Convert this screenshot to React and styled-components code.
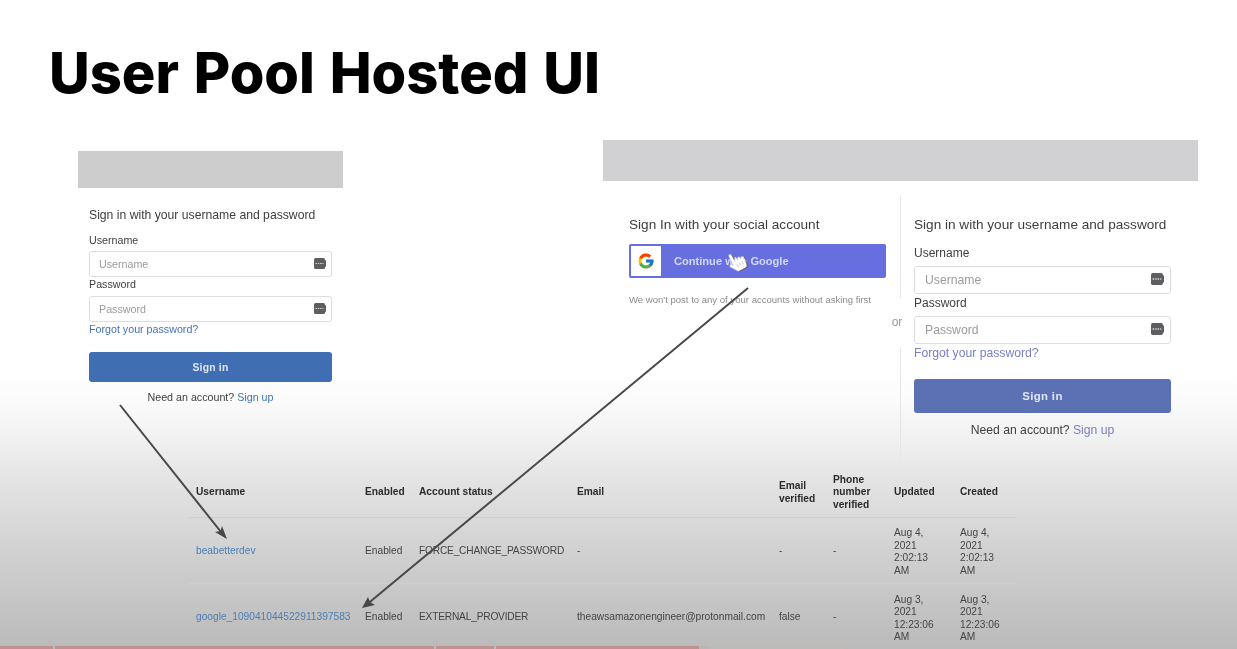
import React from "react";
import styled, { createGlobalStyle } from "styled-components";
import { FcGoogle } from "react-icons/fc";
import { FaHandPointer } from "react-icons/fa";

const Global = createGlobalStyle`
  html, body { margin: 0; padding: 0; background: #fff; }
  * { box-sizing: border-box; }
`;

const Slide = styled.div`
  position: relative;
  width: 1237px;
  height: 649px;
  overflow: hidden;
  font-family: "Liberation Sans", Arial, sans-serif;
  background: linear-gradient(180deg, #fff 0, #fff 370px, #fbfbfb 400px, #f2f2f2 435px, #e5e5e5 475px, #cfcfcf 560px, #bababa 649px);
`;

const Soft = styled.div`
  filter: blur(0.5px);
`;

const TitleBlock = styled.header`
  height: 140px;
  padding: 38px 0 0 49px;
`;

const Title = styled.h1`
  margin: 0;
  font-family: Inter, "Open Sans", sans-serif;
  font-size: 56px;
  line-height: 70px;
  font-weight: 800;
  letter-spacing: 0;
  word-spacing: 2.5px;
  white-space: nowrap;
  color: #000;
`;

const Panels = styled.section`
  display: flex;
  align-items: flex-start;
  height: 330px;
  padding-left: 78px;
  gap: 260px;
`;

const LeftPanel = styled.div`
  width: 265px;
  margin-top: 11px;
`;

const RightPanel = styled.div`
  width: 595px;
`;

const GreyBanner = styled.div`
  height: ${(p) => p.$h}px;
  background: ${(p) => p.$c};
`;

const LeftBody = styled.div`
  padding: 19px 11px 0;
`;

const RightBody = styled.div`
  display: flex;
  margin-top: 14px;
  padding-left: 26px;
`;

const SocialCol = styled.div`
  width: 257px;
  padding-top: 21px;
`;

const Heading = styled.div`
  color: #3e3e40;
  white-space: nowrap;
  font-size: ${(p) => (p.$lg ? 13.6 : 12.2)}px;
  line-height: ${(p) => (p.$lg ? 18 : 16)}px;
`;

const GoogleButton = styled.div`
  position: relative;
  display: flex;
  align-items: center;
  height: 34px;
  margin-top: 10px;
  background: #676fe0;
  border: 2px solid #676fe0;
  border-radius: 2px;
`;

const GoogleMark = styled.div`
  display: flex;
  align-items: center;
  justify-content: center;
  width: 30px;
  height: 30px;
  background: #fff;
`;

const GoogleText = styled.span`
  margin-left: 13px;
  color: #d5d8f8;
  font-size: 11.1px;
  font-weight: 700;
`;

const Hand = styled.div`
  position: absolute;
  left: 96px;
  top: 6px;
  color: #fff;
  line-height: 0;
  transform: rotate(-28deg);
  filter: drop-shadow(1px 1px 0.5px #5f5f66);
`;

const Note = styled.div`
  margin-top: 16px;
  color: #8b8b8f;
  font-size: 9.55px;
  line-height: 12px;
  white-space: nowrap;
`;

const DividerCol = styled.div`
  display: flex;
  flex-direction: column;
  align-items: center;
  width: 28px;
`;

const DividerLine = styled.div`
  width: 1px;
  height: ${(p) => p.$h}px;
  background: #e6e6e6;
`;

const OrLabel = styled.div`
  height: 49px;
  margin-left: -6px;
  color: #9a9a9c;
  font-size: 12px;
  line-height: 49px;
`;

const FormCol = styled.div`
  width: 257px;
  padding-top: 21px;
`;

const FieldLabel = styled.div`
  color: #3e3e40;
  font-size: ${(p) => (p.$lg ? 12 : 10.7)}px;
  line-height: ${(p) => p.$line}px;
  margin-top: ${(p) => p.$top || 0}px;
`;

const InputBox = styled.div`
  display: flex;
  align-items: center;
  justify-content: space-between;
  height: ${(p) => (p.$lg ? 28 : 26)}px;
  margin-top: ${(p) => p.$top}px;
  padding: 0 ${(p) => (p.$lg ? 6 : 5)}px 0 ${(p) => (p.$lg ? 10 : 9)}px;
  background: #fff;
  border: 1.5px solid #dedede;
  border-radius: 3px;
  color: #9b9b9d;
  font-size: ${(p) => (p.$lg ? 12.2 : 10.7)}px;
`;

const KeyIcon = styled.svg`
  display: block;
  width: ${(p) => (p.$lg ? 13 : 12)}px;
  height: ${(p) => (p.$lg ? 12 : 11)}px;
  margin-top: -2px;
`;

const Forgot = styled.a`
  display: block;
  color: ${(p) => (p.$lg ? "#7880c4" : "#4273b6")};
  font-size: ${(p) => (p.$lg ? 12.2 : 10.7)}px;
  line-height: ${(p) => (p.$lg ? 18 : 14)}px;
`;

const SignIn = styled.div`
  display: flex;
  align-items: center;
  justify-content: center;
  height: ${(p) => (p.$lg ? 34 : 30)}px;
  margin-top: ${(p) => (p.$lg ? 17 : 16)}px;
  background: ${(p) => (p.$lg ? "#5b71b4" : "#3f6eb2")};
  border-radius: 3px;
  color: #dfe6f4;
  font-weight: 700;
  font-size: ${(p) => (p.$lg ? 11.4 : 10.4)}px;
  letter-spacing: ${(p) => (p.$lg ? 0.35 : 0.2)}px;
`;

const NeedAccount = styled.div`
  text-align: center;
  color: #404042;
  margin-top: ${(p) => (p.$lg ? 9 : 8)}px;
  font-size: ${(p) => (p.$lg ? 12.2 : 10.7)}px;
  line-height: ${(p) => (p.$lg ? 16 : 14)}px;
`;

const SignUp = styled.a`
  color: ${(p) => (p.$lg ? "#7880c4" : "#4273b6")};
`;

const UsersTable = styled.section`
  margin-left: 189px;
  width: 828px;
`;

const Row = styled.div`
  display: grid;
  grid-template-columns: 169px 54px 158px 202px 54px 61px 66px 64px;
  align-items: center;
  height: ${(p) => p.$h}px;
  padding-top: ${(p) => p.$pad || 0}px;
  padding-bottom: ${(p) => p.$padBottom || 0}px;
  border-bottom: ${(p) => (p.$line ? "1px solid #cfcfcf" : "none")};
`;

const HeadCell = styled.div`
  padding-left: 7px;
  color: #2b2b2b;
  font-weight: 700;
  font-size: 10.2px;
  line-height: 12.6px;
`;

const Cell = styled.div`
  padding-left: 7px;
  color: #454545;
  font-size: 10.2px;
  line-height: 12.5px;
  white-space: nowrap;
`;

const StatusCell = styled(Cell)`
  letter-spacing: -0.2px;
`;

const StampCell = styled(Cell)`
  padding-top: 2px;
`;

const UserLink = styled.a`
  color: #4b7fb5;
`;

const Arrows = styled.svg`
  position: absolute;
  left: 0;
  top: 0;
  pointer-events: none;
  filter: blur(0.35px);
`;

const Progress = styled.div`
  position: absolute;
  left: 0;
  right: 0;
  bottom: 0;
  height: 3px;
  display: flex;
`;

const ProgressPiece = styled.div`
  height: 3px;
  width: ${(p) => p.$w}px;
  margin-right: ${(p) => p.$gap || 0}px;
  background: ${(p) => p.$c};
`;

const Key = ({ lg }) => (
  <KeyIcon $lg={lg} viewBox="0 0 12 11">
    <rect x="0" y="0" width="11" height="11" rx="1.5" fill="#5e5e60" />
    <rect x="9.5" y="2" width="2.5" height="7" rx="1" fill="#5e5e60" />
    <path d="M1.5 5.5h8" stroke="#d8d8d8" strokeWidth="1.2" strokeDasharray="1.4 .9" />
  </KeyIcon>
);

const Login = ({ lg }) => (
  <>
    <Heading $lg={lg}>Sign in with your username and password</Heading>
    <FieldLabel $lg={lg} $line={14} $top={lg ? 12 : 10}>Username</FieldLabel>
    <InputBox $lg={lg} $top={lg ? 6 : 4}>Username<Key lg={lg} /></InputBox>
    <FieldLabel $lg={lg} $line={lg ? 18 : 14}>Password</FieldLabel>
    <InputBox $lg={lg} $top={lg ? 4 : 5}>Password<Key lg={lg} /></InputBox>
    <Forgot $lg={lg}>Forgot your password?</Forgot>
    <SignIn $lg={lg}>Sign in</SignIn>
    <NeedAccount $lg={lg}>Need an account? <SignUp $lg={lg}>Sign up</SignUp></NeedAccount>
  </>
);

const heads = ["Username", "Enabled", "Account status", "Email", "Email verified", "Phone number verified", "Updated", "Created"];

const users = [
  ["beabetterdev", "Enabled", "FORCE_CHANGE_PASSWORD", "-", "-", "-", ["Aug 4,", "2021", "2:02:13", "AM"]],
  ["google_109041044522911397583", "Enabled", "EXTERNAL_PROVIDER", "theawsamazonengineer@protonmail.com", "false", "-", ["Aug 3,", "2021", "12:23:06", "AM"]],
];

const Stamp = ({ lines }) => (
  <StampCell>{lines.map((l) => <div key={l}>{l}</div>)}</StampCell>
);

export default function App() {
  return (
    <Slide>
      <Global />
      <Soft>
        <TitleBlock><Title>User Pool Hosted UI</Title></TitleBlock>
        <Panels>
          <LeftPanel>
            <GreyBanner $h={37} $c="#cdcdce" />
            <LeftBody><Login /></LeftBody>
          </LeftPanel>
          <RightPanel>
            <GreyBanner $h={41} $c="#d1d1d3" />
            <RightBody>
              <SocialCol>
                <Heading $lg>Sign In with your social account</Heading>
                <GoogleButton>
                  <GoogleMark><FcGoogle size={18} /></GoogleMark>
                  <GoogleText>Continue with Google</GoogleText>
                  <Hand><FaHandPointer size={19} /></Hand>
                </GoogleButton>
                <Note>We won't post to any of your accounts without asking first</Note>
              </SocialCol>
              <DividerCol>
                <DividerLine $h={103} />
                <OrLabel>or</OrLabel>
                <DividerLine $h={113} />
              </DividerCol>
              <FormCol><Login lg /></FormCol>
            </RightBody>
          </RightPanel>
        </Panels>
        <UsersTable>
          <Row $h={48} $line $padBottom={2}>
            {heads.map((h) => <HeadCell key={h}>{h}</HeadCell>)}
          </Row>
          {users.map((u, i) => (
            <Row key={u[0]} $h={66} $pad={1} $line={i === 0}>
              <Cell><UserLink>{u[0]}</UserLink></Cell>
              <Cell>{u[1]}</Cell>
              <StatusCell>{u[2]}</StatusCell>
              <Cell>{u[3]}</Cell>
              <Cell>{u[4]}</Cell>
              <Cell>{u[5]}</Cell>
              <Stamp lines={u[6]} />
              <Stamp lines={u[6]} />
            </Row>
          ))}
        </UsersTable>
      </Soft>
      <Arrows width="1237" height="649" viewBox="0 0 1237 649">
        <g stroke="#48484a" strokeWidth="2" fill="none">
          <path d="M120 405L225 537" />
          <path d="M748 288L365 606" />
        </g>
        <path d="M227 539L215 532L220.5 531L222 526Z" fill="#48484a" />
        <path d="M362 608L368 597L370 602L375 605Z" fill="#48484a" />
      </Arrows>
      <Progress>
        <ProgressPiece $w={53} $gap={2} $c="#bf9291" />
        <ProgressPiece $w={379} $gap={2} $c="#bf9291" />
        <ProgressPiece $w={58} $gap={2} $c="#bf9291" />
        <ProgressPiece $w={203} $gap={0} $c="#bf9291" />
        <ProgressPiece $w={10} $gap={3} $c="#bdb5b5" />
        <ProgressPiece $w={134} $c="#bdbaba" />
      </Progress>
    </Slide>
  );
}
